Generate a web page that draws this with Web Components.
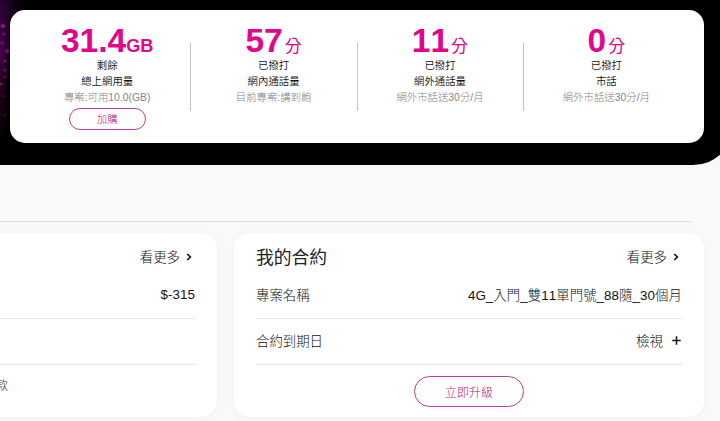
<!DOCTYPE html>
<html lang="zh-Hant">
<head>
<meta charset="utf-8">
<title>我的合約</title>
<style>
html,body{margin:0;width:720px;height:421px;overflow:hidden;background:#f9f9f9}
body{font-family:"Liberation Sans","Noto Sans CJK TC",sans-serif;color:#222;font-kerning:none}
</style>
</head>
<body>
<account-page></account-page>
<script>
const define = (name, html) => {
  const t = document.createElement('template');
  t.innerHTML = html;
  customElements.define(name, class extends HTMLElement {
    constructor() {
      super();
      this.attachShadow({ mode: 'open' }).append(t.content.cloneNode(true));
    }
  });
};

define('pill-button', `
<style>
:host{display:flex;align-items:center;justify-content:center;box-sizing:border-box;border:1px solid #c23b94;border-radius:20px;color:#b8197d;font-weight:300;background:#fff;white-space:nowrap}
</style><slot></slot>`);

define('usage-stat', `
<style>
:host{display:flex;flex-direction:column;align-items:center;width:166.4px;box-sizing:border-box;position:relative;font-size:10.4px;line-height:16px;white-space:nowrap}
.value{height:48px;display:flex;align-items:baseline;box-sizing:border-box;padding-top:12px;color:#e2068a;font-size:33.5px;line-height:38px;font-weight:700}
.label{color:#111;font-weight:350;height:16px}
.note{color:#858585;font-weight:300;height:16px}
:host([divided])::after{content:"";position:absolute;right:-1px;top:33px;width:1px;height:68px;background:#c4c4c4}
::slotted([slot=unit]){font-size:18.2px;line-height:20px}
::slotted([slot=unit].cjk){font-size:17px;font-weight:400;margin-left:2px}
::slotted(pill-button){width:77px;height:22px;margin-top:2px;padding-top:1px}
</style>
<div class="value"><slot name="value"></slot><slot name="unit"></slot></div>
<div class="label"><slot name="state"></slot></div>
<div class="label"><slot name="kind"></slot></div>
<div class="note"><slot name="note"></slot></div>
<slot></slot>`);

define('usage-banner', `
<style>
:host{display:block;box-sizing:border-box;width:734px;height:165px;padding:10px 30px 0 10px;background:
radial-gradient(circle 3px at 3px 26px,#b51cc0,transparent),
radial-gradient(circle 2px at 4px 34px,#8c1498,transparent),
radial-gradient(circle 3px at 2px 43px,#790f79,transparent),
radial-gradient(circle 3px at 7px 51px,#8b177b,transparent),
radial-gradient(circle 2px at 5px 61px,#911777,transparent),
radial-gradient(circle 2px at 5px 70px,#85166b,transparent),
radial-gradient(circle 2px at 5px 77px,#811457,transparent),
radial-gradient(circle 2px at 1px 84px,#9c2950,transparent),
radial-gradient(circle 2px at 5px 96px,#43112c,transparent),
radial-gradient(circle 2px at 5px 115px,#4d0f32,transparent),
radial-gradient(ellipse 13px 50px at 0 50px,#4b004f,transparent),
radial-gradient(ellipse 24px 55px at 0 8px,#2a0434,transparent),
radial-gradient(ellipse 9px 50px at 0 95px,#210016,transparent),#000;
border-bottom-right-radius:41px}
.panel{display:flex;height:133px;box-sizing:border-box;padding-left:14px;background:#fff;border-radius:15px}
</style>
<div class="panel"><slot></slot></div>`);

define('info-card', `
<style>
:host{display:flex;flex-direction:column;box-sizing:border-box;height:184px;padding:0 22px;border-radius:16px;background:#fff;box-shadow:0 1px 8px rgba(0,0,0,.035);font-size:13.4px;font-weight:300;color:#111}
header{display:flex;justify-content:space-between;align-items:center;height:39px;padding-top:5px}
h2{margin:0;font-size:17.8px;font-weight:400;line-height:26px;color:#222}
.more{display:flex;align-items:center;gap:6px;margin-top:-3px;padding-right:3px}
.more svg{margin-top:1px}
</style>
<header><h2><slot name="title"></slot></h2><span class="more"><span>看更多</span>
<svg width="6" height="8" viewBox="0 0 6 8" fill="none" stroke="#111" stroke-width="1.6"><path d="M1.2 1 4.4 4 1.2 7"/></svg></span></header>
<slot></slot>`);

define('info-row', `
<style>
:host{display:flex;justify-content:space-between;align-items:center;box-sizing:border-box;height:46px;padding-bottom:3px;border-bottom:1px solid #e4e4e4;white-space:nowrap}
:host([first]){height:42px;padding-bottom:7px;border-bottom-color:#e9e9e9}
.v{display:flex;align-items:center}
:host([first]) .v{letter-spacing:.06px}
</style><slot name="label"></slot><span class="v"><slot></slot></span>`);

define('account-page', `
<style>
:host{display:block;width:720px;height:421px;overflow:hidden}
.rule{height:1px;width:692px;margin-top:56px;background:#dedede}
.cards{display:grid;grid-template-columns:217px 470px;gap:17px;padding-top:11px}
.left{margin-left:-250px}
.owed{margin:12px 0 0 199px;width:37px;text-align:right;font-size:12px;line-height:18px;color:#333}
.upgrade{width:110px;height:31px;font-size:12px;margin:11px auto 0}
svg.plus{margin:1px 1px 0 9px}
</style>
<usage-banner>
  <usage-stat divided><span slot="value">31.4</span><span slot="unit">GB</span><span slot="state">剩餘</span><span slot="kind">總上網用量</span><span slot="note">專案:可用10.0(GB)</span><pill-button>加購</pill-button></usage-stat>
  <usage-stat divided><span slot="value">57</span><span slot="unit" class="cjk">分</span><span slot="state">已撥打</span><span slot="kind">網內通話量</span><span slot="note">目前專案:講到飽</span></usage-stat>
  <usage-stat divided><span slot="value">11</span><span slot="unit" class="cjk">分</span><span slot="state">已撥打</span><span slot="kind">網外通話量</span><span slot="note">網外市話送30分/月</span></usage-stat>
  <usage-stat><span slot="value">0</span><span slot="unit" class="cjk">分</span><span slot="state">已撥打</span><span slot="kind">市話</span><span slot="note">網外市話送30分/月</span></usage-stat>
</usage-banner>
<div class="rule"></div>
<div class="cards">
  <info-card class="left">
    <info-row first><span slot="label"></span>$-315</info-row>
    <info-row></info-row>
    <div class="owed">款</div>
  </info-card>
  <info-card>
    <span slot="title">我的合約</span>
    <info-row first><span slot="label">專案名稱</span>4G_入門_雙11單門號_88隨_30個月</info-row>
    <info-row><span slot="label">合約到期日</span>檢視<svg class="plus" width="9" height="9" viewBox="0 0 9 9" stroke="#111" stroke-width="1.5"><path d="M4.5 0.3V8.7M0.3 4.5H8.7"/></svg></info-row>
    <pill-button class="upgrade">立即升級</pill-button>
  </info-card>
</div>`);
</script>
</body>
</html>
